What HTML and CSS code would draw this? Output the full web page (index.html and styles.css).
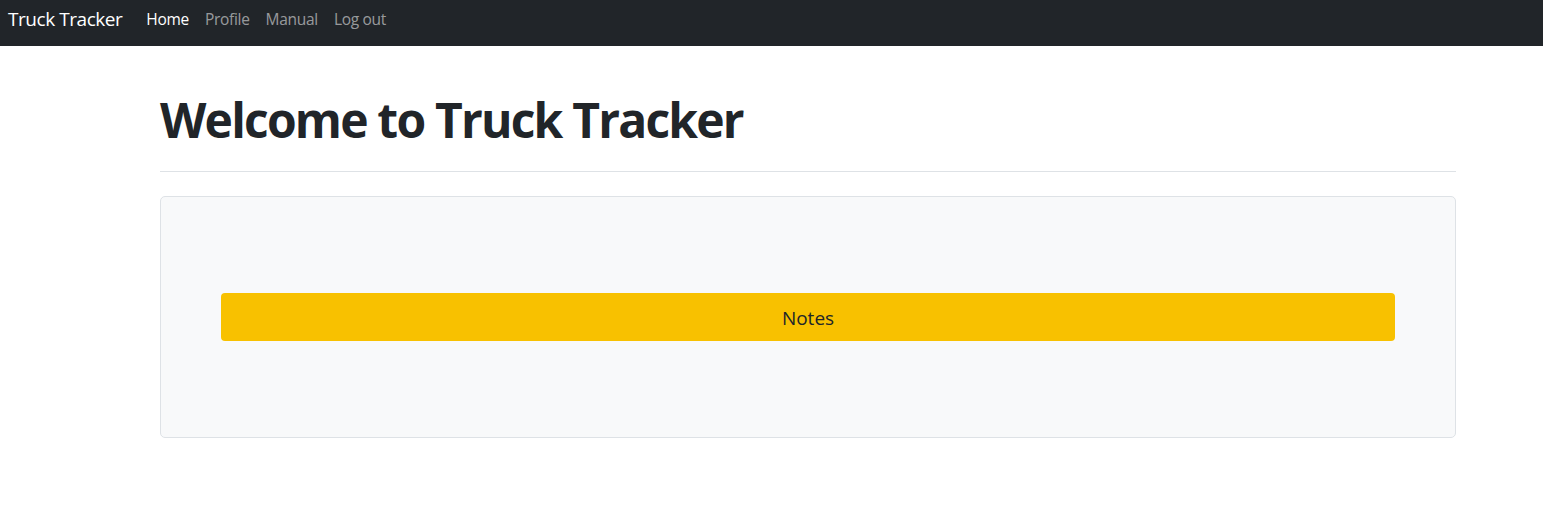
FILE: index.html
```html
<!DOCTYPE html>
<html lang="en">
<head>
<meta charset="utf-8">
<title>Truck Tracker</title>
<link rel="stylesheet" href="styles.css">
</head>
<body>
<nav class="navbar">
  <a class="brand" href="#">Truck Tracker</a>
  <ul class="nav-links">
    <li><a class="nav-link active" href="#">Home</a></li>
    <li><a class="nav-link" href="#">Profile</a></li>
    <li><a class="nav-link" href="#">Manual</a></li>
    <li><a class="nav-link" href="#">Log out</a></li>
  </ul>
</nav>
<main class="container">
  <h1 class="title">Welcome to Truck Tracker</h1>
  <hr class="divider">
  <section class="panel">
    <button class="btn-notes" type="button">Notes</button>
  </section>
</main>
</body>
</html>
```

FILE: styles.css
```css
* { box-sizing: border-box; }
body {
  margin: 0;
  font-family: "Open Sans", "Noto Sans", sans-serif;
  color: #212529;
  background: #fff;
}
.navbar {
  height: 46px;
  background: #212529;
  display: flex;
  align-items: center;
  padding: 0 8px 8px;
}
.brand {
  color: #fff;
  font-size: 19px;
  text-decoration: none;
  margin-right: 16px;
  letter-spacing: -0.45px;
}
.nav-links {
  list-style: none;
  margin: 0;
  padding: 0;
  display: flex;
}
.nav-link {
  display: block;
  padding: 0 8px;
  font-size: 15.5px;
  color: rgba(255,255,255,0.55);
  text-decoration: none;
  letter-spacing: -0.3px;
}
.nav-link.active { color: #fff; }
.container {
  margin-left: 160px;
  width: 1296px;
}
.title {
  font-size: 48px;
  font-weight: 700;
  line-height: 1.2;
  margin: 45px 0 0;
  letter-spacing: -1.8px;
}
.divider {
  margin: 22px 0 24px;
  border: 0;
  border-top: 1px solid #dee2e6;
}
.panel {
  background: #f8f9fa;
  border: 1px solid #dee2e6;
  border-radius: 5px;
  height: 242px;
  padding: 96px 60px 0;
}
.btn-notes {
  display: block;
  width: 100%;
  height: 48px;
  padding-top: 4px;
  background: #f8c100;
  border: 0;
  border-radius: 4px;
  font-family: inherit;
  font-size: 19px;
  color: #212529;
  cursor: pointer;
}
```
